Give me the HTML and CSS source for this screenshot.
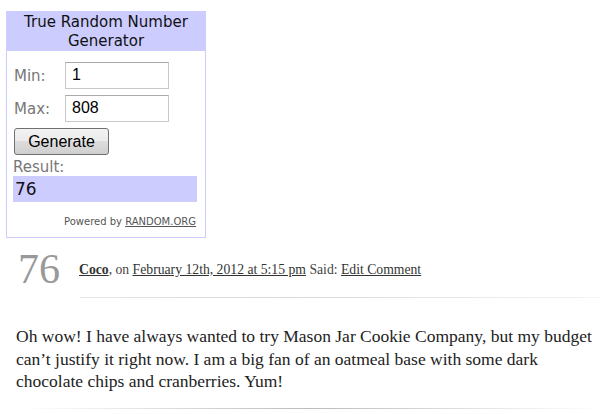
FILE: index.html
```html
<!DOCTYPE html>
<html>
<head>
<meta charset="utf-8">
<link rel="stylesheet" href="styles.css">
</head>
<body>
<div class="widget">
  <div class="w-head">True Random Number<br>Generator</div>
  <div class="w-body">
    <div class="row"><span class="lbl">Min:</span><span class="inp">1</span></div>
    <div class="row"><span class="lbl">Max:</span><span class="inp">808</span></div>
    <div class="btn">Generate</div>
    <div class="res-lbl">Result:</div>
    <div class="res">76</div>
    <div class="powered">Powered by <a href="#">RANDOM.ORG</a></div>
  </div>
</div>
<div class="comment">
  <div class="c-head">
    <span class="num">76</span>
    <span class="meta"><a href="#"><b>Coco</b></a>, on <a href="#">February 12th, 2012 at 5:15 pm</a> Said: <a href="#">Edit Comment</a></span>
  </div>
  <div class="rule1"></div>
  <p class="text">Oh wow! I have always wanted to try Mason Jar Cookie Company, but my budget can’t justify it right now. I am a big fan of an oatmeal base with some dark chocolate chips and cranberries. Yum!</p>
  <div class="rule2"></div>
</div>
</body>
</html>
```
FILE: styles.css
```css
body { margin: 0; background: #fff; font-family: "Liberation Serif", serif; }
.widget { margin: 11px 0 0 6px; width: 198px; border: 1px solid #ccccff; font-family: "DejaVu Sans", Verdana, sans-serif; }
.w-head { background: #ccccff; text-align: center; font-size: 15px; line-height: 19px; padding: 1px 0 0; height: 38px; color: #111; }
.w-body { padding: 11px 7px 10px 6px; }
.row { display: flex; align-items: center; margin-bottom: 6px; }
.lbl { width: 51px; color: #777; font-size: 15px; padding-left: 1px; }
.inp { box-sizing: border-box; width: 104px; height: 27px; border: 1px solid #c8c8c8; border-top-color: #aaa; font-family: "Liberation Sans", Arial, sans-serif; font-size: 16px; padding: 3px 0 0 6px; color: #000; }
.btn { box-sizing: border-box; width: 95px; height: 27px; margin: 2px 0 0 1px; border: 1px solid #707070; border-radius: 3px; background: linear-gradient(#f2f2f2, #ebebeb 50%, #dddddd 50%, #cfcfcf); font-family: "Liberation Sans", Arial, sans-serif; font-size: 16px; text-align: center; line-height: 25px; color: #000; }
.res-lbl { color: #777; font-size: 15px; margin-top: 3px; line-height: 18px; }
.res { background: #ccccff; height: 26px; font-size: 17px; line-height: 27px; padding-left: 2px; color: #111; width: 182px; }
.powered { text-align: right; font-size: 10px; color: #555; margin-top: 14px; padding-right: 2px; }
.powered a { color: #555; }
.comment { padding: 0 0 0 16px; }
.c-head { display: flex; align-items: center; margin-top: 11px; height: 40px; }
.num { font-size: 42px; color: #999; width: 61px; line-height: 40px; padding-left: 2px; }
.meta { font-size: 13.7px; color: #444; padding-top: 2px; }
.meta a { color: #333; }
.rule1 { height: 1px; margin: 8px 0 0 64px; background: linear-gradient(to right, #e6e6e6, #d8d8d8 40%, #f4f4f4); }
.text { margin: 27px 0 0; font-size: 17.5px; line-height: 22.5px; color: #222; width: 584px; }
.rule2 { height: 1px; margin: 15px 0 0 6px; background: linear-gradient(to right, rgba(180,180,180,0), #bbb 50%, rgba(180,180,180,0)); }
```
